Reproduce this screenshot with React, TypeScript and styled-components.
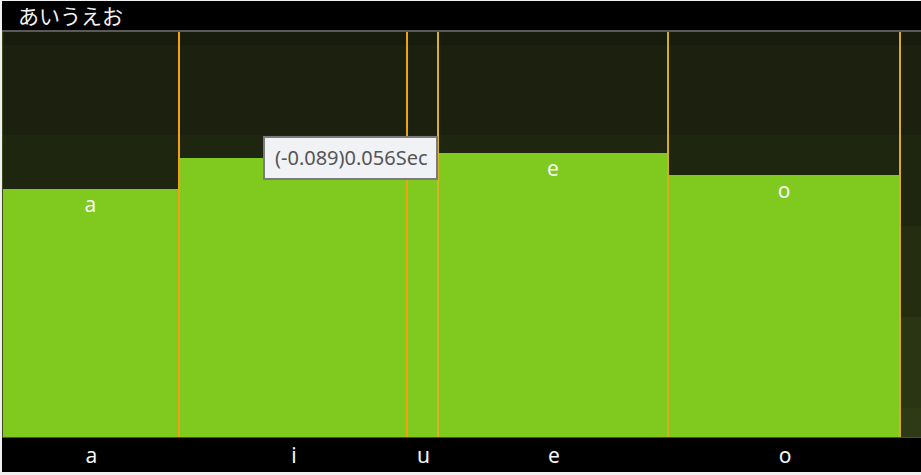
import React from 'react';
import styled, { createGlobalStyle } from 'styled-components';

const GlobalStyle = createGlobalStyle`
  *, *::before, *::after {
    box-sizing: border-box;
  }
  html, body {
    margin: 0;
    padding: 0;
    background: #f0f0f0;
  }
`;

const Frame = styled.div`
  margin: 1px 0 0 2px;
  width: 919px;
  font-family: 'Noto Sans', 'Noto Sans CJK JP', sans-serif;
`;

const Header = styled.div`
  height: 31px;
  background: #000;
  border-bottom: 2px solid #5a5a5a;
  color: #f2f2f2;
  font-family: 'Noto Sans CJK JP', sans-serif;
  font-size: 21px;
  line-height: 29px;
  padding-left: 16px;
`;

const Chart = styled.div`
  position: relative;
  height: 406px;
  display: flex;
  align-items: stretch;
  border-left: 1px solid #3e4a1c;
  border-bottom: 1px solid #46541f;
  background: linear-gradient(
    to bottom,
    #171c0c 0px,
    #171c0c 13px,
    #1b210e 13px,
    #1b210e 103px,
    #1f260f 103px,
    #1f260f 194px,
    #242d10 194px,
    #242d10 285px,
    #2a3513 285px,
    #2a3513 376px,
    #2e3a15 376px
  );
`;

const Segment = styled.div<{ $w: number; $line: string }>`
  width: ${(p) => p.$w}px;
  flex: none;
  display: flex;
  flex-direction: column;
  justify-content: flex-end;
  border-right: 2px solid ${(p) => p.$line};
`;

const Bar = styled.div`
  background: #80c91f;
  display: flex;
  justify-content: center;
  align-items: flex-start;
  color: #f6f6f6;
  font-size: 21px;
  line-height: 24px;
  padding-top: 3px;
  overflow: hidden;
`;

const Tooltip = styled.div`
  position: absolute;
  left: 260px;
  top: 104px;
  width: 175px;
  height: 44px;
  border: 2px solid #7b7b7b;
  background: #f0f2f6;
  color: #555;
  font-size: 20px;
  line-height: 40px;
  padding-left: 10px;
  white-space: nowrap;
`;

const Footer = styled.div`
  height: 34px;
  background: #000;
  display: flex;
  padding-left: 1px;
`;

const FooterCell = styled.div<{ $w: number }>`
  width: ${(p) => p.$w}px;
  flex: none;
  text-align: center;
  color: #f6f6f6;
  font-size: 21px;
  line-height: 34px;
`;

interface Phoneme {
  label: string;
  width: number;
  top: number;
  line: string;
  // the hover box sits over this bar's caption
  covered?: boolean;
}

const CHART_HEIGHT = 405;

const phonemes: Phoneme[] = [
  { label: 'a', width: 177, top: 157, line: '#f2a20e' },
  { label: 'i', width: 228, top: 126, line: '#f2a20e', covered: true },
  { label: 'u', width: 31, top: 121, line: '#d8b228', covered: true },
  { label: 'e', width: 230, top: 121, line: '#d4ae22' },
  { label: 'o', width: 232, top: 143, line: '#d8aa2a' },
];

const App: React.FC = () => {
  return (
    <Frame>
      <GlobalStyle />
      <Header>あいうえお</Header>
      <Chart>
        {phonemes.map((p) => (
          <Segment key={p.label} $w={p.width} $line={p.line}>
            <Bar style={{ height: CHART_HEIGHT - p.top }}>{p.covered ? null : p.label}</Bar>
          </Segment>
        ))}
        <Tooltip>(-0.089)0.056Sec</Tooltip>
      </Chart>
      <Footer>
        {phonemes.map((p) => (
          <FooterCell key={p.label} $w={p.width}>
            {p.label}
          </FooterCell>
        ))}
      </Footer>
    </Frame>
  );
};

export default App;
